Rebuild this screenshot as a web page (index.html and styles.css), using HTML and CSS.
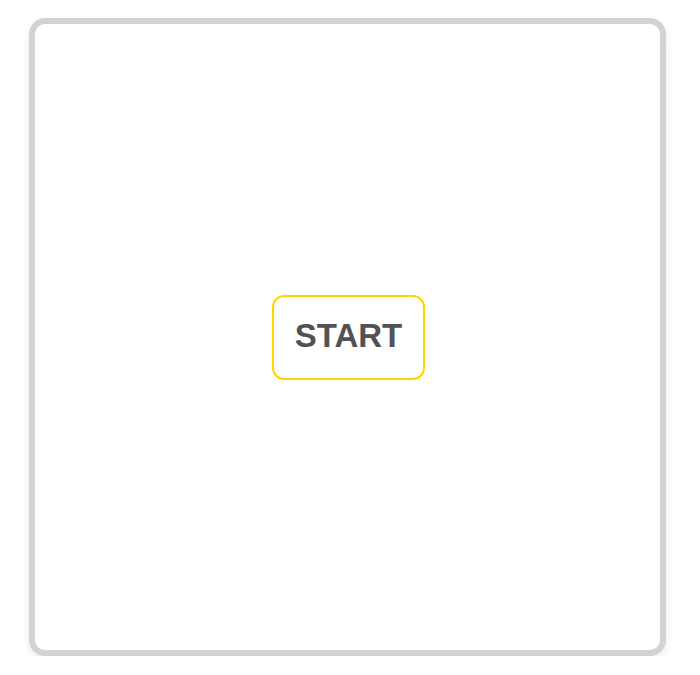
FILE: index.html
```html
<!DOCTYPE html>
<html>
<head>
<meta charset="utf-8">
<link rel="stylesheet" href="styles.css">
</head>
<body>
<div class="frame">
  <button class="start">START</button>
</div>
</body>
</html>
```
FILE: styles.css
```css
html, body { margin: 0; padding: 0; background: #fff; }
body {
  padding: 18px 0 0 29px;
  font-family: "Liberation Sans", Arial, sans-serif;
}
.frame {
  box-sizing: border-box;
  width: 637px;
  height: 638px;
  border: 6px solid #d3d3d3;
  border-radius: 16px;
  box-shadow: 0 4px 8px rgba(0,0,0,0.08);
  display: flex;
  align-items: center;
  justify-content: center;
  background: #fff;
}
.start {
  box-sizing: border-box;
  width: 153px;
  height: 85px;
  margin-left: 2px;
  border: 2px solid #ffd700;
  border-radius: 12px;
  background: #fff;
  color: #505255;
  font-family: "Liberation Sans", Arial, sans-serif;
  font-weight: bold;
  font-size: 33px;
  padding: 0 0 3px 0;
  display: flex;
  align-items: center;
  justify-content: center;
}
```
